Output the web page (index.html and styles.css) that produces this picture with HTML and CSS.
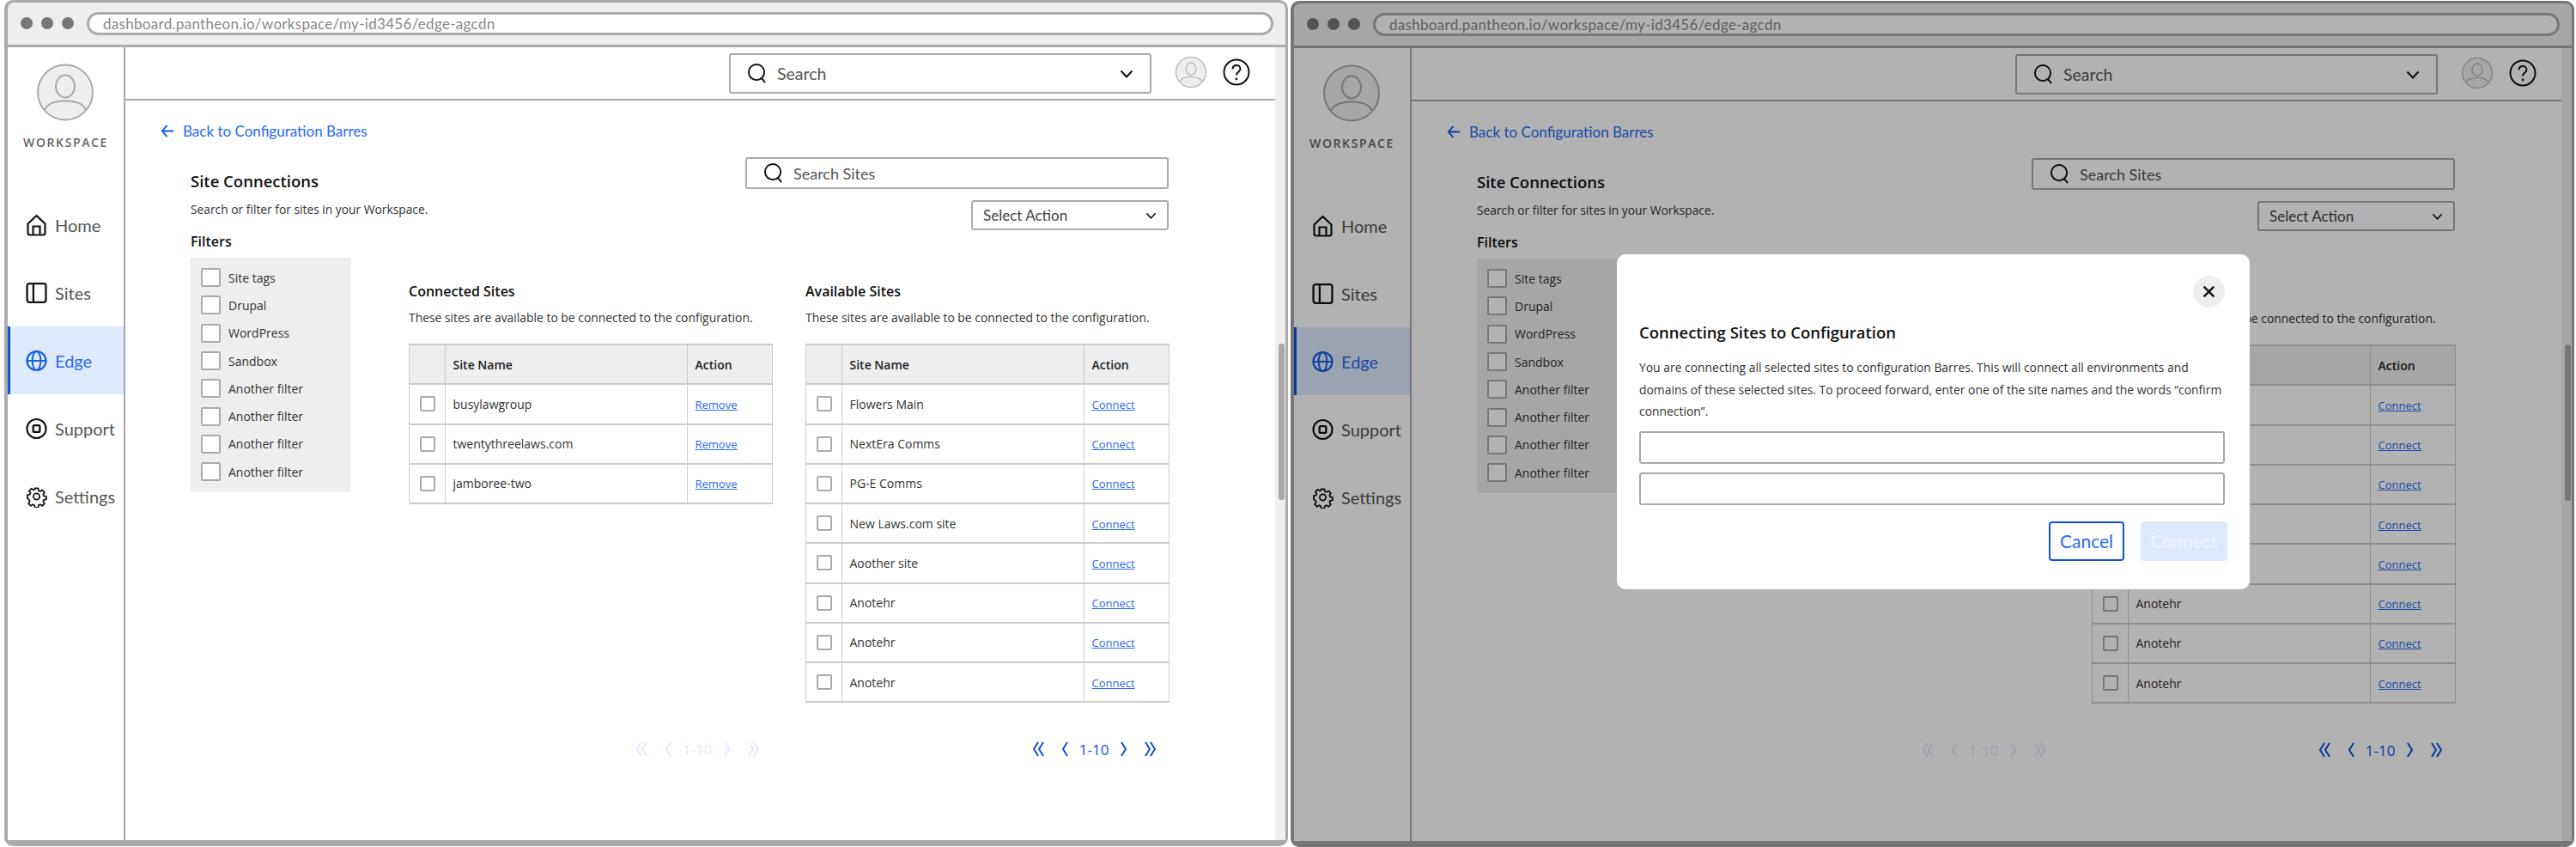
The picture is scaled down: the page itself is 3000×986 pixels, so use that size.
FILE: index.html
```html
<!DOCTYPE html>
<html lang="en">
<head>
    <meta charset="UTF-8">
    <title>Site Connections</title>
    <link rel="stylesheet" href="styles.css">
</head>
<body>
    <!-- shared icons -->
    <svg class="icon-defs" width="0" height="0">
        <symbol id="i-search" viewBox="0 0 24 24"><circle cx="11" cy="10.5" r="9.5" fill="none" stroke="currentColor" stroke-width="2"/><path d="M17 17.5l4.500 5.500" fill="none" stroke="currentColor" stroke-width="2"/></symbol>
        <symbol id="i-chevron" viewBox="0 0 16 10"><path d="M1.500 1.500L8 8.500l6.500-7" fill="none" stroke="currentColor" stroke-width="2"/></symbol>
        <symbol id="i-avatar" viewBox="0 0 66 66"><circle cx="33" cy="33" r="32" fill="#eee" stroke="#aaa" stroke-width="2"/><ellipse cx="33" cy="26" rx="11" ry="13" fill="#eee" stroke="#aaa" stroke-width="2"/><path d="M9 54c3-9 13-11 24-11s21 2 24 11" fill="#eee" stroke="#aaa" stroke-width="2"/></symbol>
        <symbol id="i-help" viewBox="0 0 32 32"><circle cx="16" cy="16" r="14.500" fill="none" stroke="currentColor" stroke-width="2"/><path d="M11.500 12.500c0-3 2-4.500 4.500-4.500s4.500 1.600 4.500 4.200c0 3.300-4.500 3.600-4.500 7.300" fill="none" stroke="currentColor" stroke-width="2"/><circle cx="16" cy="24" r="1.400" fill="currentColor"/></symbol>
        <symbol id="i-home" viewBox="0 0 24 26"><path d="M12 2L2 11.500V22a2.500 2.500 0 0 0 2.500 2.500h15A2.500 2.500 0 0 0 22 22V11.500z" fill="none" stroke="currentColor" stroke-width="2.200" stroke-linejoin="round"/><path d="M8 24.500V14.500h8v10" fill="none" stroke="currentColor" stroke-width="2.200"/></symbol>
        <symbol id="i-sites" viewBox="0 0 24 24"><rect x="1.500" y="1.500" width="21" height="21" rx="2.500" fill="none" stroke="currentColor" stroke-width="2.200"/><path d="M8.500 1.500v21" fill="none" stroke="currentColor" stroke-width="2.200"/></symbol>
        <symbol id="i-globe" viewBox="0 0 26 26"><circle cx="13" cy="13" r="11.500" fill="none" stroke="currentColor" stroke-width="2.200"/><ellipse cx="13" cy="13" rx="5" ry="11.500" fill="none" stroke="currentColor" stroke-width="2"/><path d="M1.500 13h23" fill="none" stroke="currentColor" stroke-width="2"/></symbol>
        <symbol id="i-support" viewBox="0 0 26 26"><circle cx="13" cy="13" r="11.500" fill="none" stroke="currentColor" stroke-width="2.200"/><rect x="9" y="9" width="8" height="8" rx="1.500" fill="none" stroke="currentColor" stroke-width="2.400"/></symbol>
        <symbol id="i-gear" viewBox="0 0 28 28"><path d="M11.600 2h4.800l.7 3.600 2.200.9 3-2 3.400 3.400-2 3 .9 2.200 3.600.7v4.400l-3.600.7-.9 2.200 2 3-3.400 3.400-3-2-2.200.9-.7 3.600h-4.800l-.7-3.600-2.200-.9-3 2-3.400-3.400 2-3-.9-2.200L.8 16.200v-4.400l3.600-.7.9-2.200-2-3 3.400-3.400 3 2 2.200-.9z" transform="translate(1.400 1.400) scale(.9)" fill="none" stroke="currentColor" stroke-width="2.200" stroke-linejoin="round"/><circle cx="14" cy="14" r="4" fill="none" stroke="currentColor" stroke-width="2"/></symbol>
        <symbol id="i-first" viewBox="0 0 14 18"><path d="M7 1L2 9l5 8M13 1L8 9l5 8" fill="none" stroke="currentColor" stroke-width="2"/></symbol>
        <symbol id="i-prev" viewBox="0 0 8 18"><path d="M7 1L2 9l5 8" fill="none" stroke="currentColor" stroke-width="2"/></symbol>
        <symbol id="i-next" viewBox="0 0 8 18"><path d="M1 1l5 8-5 8" fill="none" stroke="currentColor" stroke-width="2"/></symbol>
        <symbol id="i-last" viewBox="0 0 14 18"><path d="M1 1l5 8-5 8M7 1l5 8-5 8" fill="none" stroke="currentColor" stroke-width="2"/></symbol>
    </svg>

    <!-- left window -->
    <div class="browser">
        <div class="toolbar">
            <div class="dots"><span></span><span></span><span></span></div>
            <div class="url-bar">dashboard.pantheon.io/workspace/my-id3456/edge-agcdn</div>
        </div>
        <div class="window-body">
            <aside class="sidebar">
                <svg class="workspace-avatar"><use href="#i-avatar"/></svg>
                <div class="workspace-name">WORKSPACE</div>
                <nav class="nav">
                    <a class="nav-item"><svg class="nav-icon"><use href="#i-home"/></svg>Home</a>
                    <a class="nav-item"><svg class="nav-icon"><use href="#i-sites"/></svg>Sites</a>
                    <a class="nav-item active"><svg class="nav-icon"><use href="#i-globe"/></svg>Edge</a>
                    <a class="nav-item"><svg class="nav-icon"><use href="#i-support"/></svg>Support</a>
                    <a class="nav-item"><svg class="nav-icon"><use href="#i-gear"/></svg>Settings</a>
                </nav>
            </aside>
            <main class="main">
                <header class="topbar">
                    <div class="top-search">
                        <svg class="search-icon"><use href="#i-search"/></svg>
                        <span>Search</span>
                        <svg class="chevron"><use href="#i-chevron"/></svg>
                    </div>
                    <svg class="top-avatar"><use href="#i-avatar"/></svg>
                    <svg class="top-help"><use href="#i-help"/></svg>
                </header>
                <div class="page">
                    <a class="back-link"><svg class="back-arrow" viewBox="0 0 16 18"><path d="M8 2L2 9l6 7M2 9h14" fill="none" stroke="currentColor" stroke-width="2"/></svg>Back to Configuration Barres</a>
                    <div class="page-head">
                        <div>
                            <h1 class="page-title">Site Connections</h1>
                            <p class="page-desc">Search or filter for sites in your Workspace.</p>
                        </div>
                        <div class="page-actions">
                            <div class="site-search">
                                <svg class="search-icon"><use href="#i-search"/></svg>
                                <span>Search Sites</span>
                            </div>
                            <div class="action-select">
                                <span>Select Action</span>
                                <svg class="chevron small"><use href="#i-chevron"/></svg>
                            </div>
                        </div>
                    </div>
                    <div class="page-body">
                        <section class="filters">
                            <h2 class="filters-title">Filters</h2>
                            <ul class="filter-list">
                                <li><span class="check"></span>Site tags</li>
                                <li><span class="check"></span>Drupal</li>
                                <li><span class="check"></span>WordPress</li>
                                <li><span class="check"></span>Sandbox</li>
                                <li><span class="check"></span>Another filter</li>
                                <li><span class="check"></span>Another filter</li>
                                <li><span class="check"></span>Another filter</li>
                                <li><span class="check"></span>Another filter</li>
                            </ul>
                        </section>
                        <section class="site-col connected">
                            <h2 class="col-title">Connected Sites</h2>
                            <p class="col-desc">These sites are available to be connected to the configuration.</p>
                            <table class="site-table">
                                <thead><tr><th class="cell-check"></th><th class="cell-name">Site Name</th><th>Action</th></tr></thead>
                                <tbody>
                                    <tr><td><span class="row-check"></span></td><td>busylawgroup</td><td><a class="row-link">Remove</a></td></tr>
                                    <tr><td><span class="row-check"></span></td><td>twentythreelaws.com</td><td><a class="row-link">Remove</a></td></tr>
                                    <tr><td><span class="row-check"></span></td><td>jamboree-two</td><td><a class="row-link">Remove</a></td></tr>
                                </tbody>
                            </table>
                            <div class="pager disabled">
                                <svg class="pg-double"><use href="#i-first"/></svg><svg class="pg-single"><use href="#i-prev"/></svg><span>1-10</span><svg class="pg-single"><use href="#i-next"/></svg><svg class="pg-double"><use href="#i-last"/></svg>
                            </div>
                        </section>
                        <section class="site-col available">
                            <h2 class="col-title">Available Sites</h2>
                            <p class="col-desc">These sites are available to be connected to the configuration.</p>
                            <table class="site-table">
                                <thead><tr><th class="cell-check"></th><th class="cell-name">Site Name</th><th>Action</th></tr></thead>
                                <tbody>
                                    <tr><td><span class="row-check"></span></td><td>Flowers Main</td><td><a class="row-link">Connect</a></td></tr>
                                    <tr><td><span class="row-check"></span></td><td>NextEra Comms</td><td><a class="row-link">Connect</a></td></tr>
                                    <tr><td><span class="row-check"></span></td><td>PG-E Comms</td><td><a class="row-link">Connect</a></td></tr>
                                    <tr><td><span class="row-check"></span></td><td>New Laws.com site</td><td><a class="row-link">Connect</a></td></tr>
                                    <tr><td><span class="row-check"></span></td><td>Aoother site</td><td><a class="row-link">Connect</a></td></tr>
                                    <tr><td><span class="row-check"></span></td><td>Anotehr</td><td><a class="row-link">Connect</a></td></tr>
                                    <tr><td><span class="row-check"></span></td><td>Anotehr</td><td><a class="row-link">Connect</a></td></tr>
                                    <tr><td><span class="row-check"></span></td><td>Anotehr</td><td><a class="row-link">Connect</a></td></tr>
                                </tbody>
                            </table>
                            <div class="pager">
                                <svg class="pg-double"><use href="#i-first"/></svg><svg class="pg-single"><use href="#i-prev"/></svg><span>1-10</span><svg class="pg-single"><use href="#i-next"/></svg><svg class="pg-double"><use href="#i-last"/></svg>
                            </div>
                        </section>
                    </div>
                </div>
            </main>
            <div class="scrollbar"><div class="scroll-thumb"></div></div>
        </div>
    </div>

    <!-- right window, same page with the modal open -->
    <div class="browser with-modal">
        <div class="toolbar">
            <div class="dots"><span></span><span></span><span></span></div>
            <div class="url-bar">dashboard.pantheon.io/workspace/my-id3456/edge-agcdn</div>
        </div>
        <div class="window-body">
            <aside class="sidebar">
                <svg class="workspace-avatar"><use href="#i-avatar"/></svg>
                <div class="workspace-name">WORKSPACE</div>
                <nav class="nav">
                    <a class="nav-item"><svg class="nav-icon"><use href="#i-home"/></svg>Home</a>
                    <a class="nav-item"><svg class="nav-icon"><use href="#i-sites"/></svg>Sites</a>
                    <a class="nav-item active"><svg class="nav-icon"><use href="#i-globe"/></svg>Edge</a>
                    <a class="nav-item"><svg class="nav-icon"><use href="#i-support"/></svg>Support</a>
                    <a class="nav-item"><svg class="nav-icon"><use href="#i-gear"/></svg>Settings</a>
                </nav>
            </aside>
            <main class="main">
                <header class="topbar">
                    <div class="top-search">
                        <svg class="search-icon"><use href="#i-search"/></svg>
                        <span>Search</span>
                        <svg class="chevron"><use href="#i-chevron"/></svg>
                    </div>
                    <svg class="top-avatar"><use href="#i-avatar"/></svg>
                    <svg class="top-help"><use href="#i-help"/></svg>
                </header>
                <div class="page">
                    <a class="back-link"><svg class="back-arrow" viewBox="0 0 16 18"><path d="M8 2L2 9l6 7M2 9h14" fill="none" stroke="currentColor" stroke-width="2"/></svg>Back to Configuration Barres</a>
                    <div class="page-head">
                        <div>
                            <h1 class="page-title">Site Connections</h1>
                            <p class="page-desc">Search or filter for sites in your Workspace.</p>
                        </div>
                        <div class="page-actions">
                            <div class="site-search">
                                <svg class="search-icon"><use href="#i-search"/></svg>
                                <span>Search Sites</span>
                            </div>
                            <div class="action-select">
                                <span>Select Action</span>
                                <svg class="chevron small"><use href="#i-chevron"/></svg>
                            </div>
                        </div>
                    </div>
                    <div class="page-body">
                        <section class="filters">
                            <h2 class="filters-title">Filters</h2>
                            <ul class="filter-list">
                                <li><span class="check"></span>Site tags</li>
                                <li><span class="check"></span>Drupal</li>
                                <li><span class="check"></span>WordPress</li>
                                <li><span class="check"></span>Sandbox</li>
                                <li><span class="check"></span>Another filter</li>
                                <li><span class="check"></span>Another filter</li>
                                <li><span class="check"></span>Another filter</li>
                                <li><span class="check"></span>Another filter</li>
                            </ul>
                        </section>
                        <section class="site-col connected">
                            <h2 class="col-title">Connected Sites</h2>
                            <p class="col-desc">These sites are available to be connected to the configuration.</p>
                            <table class="site-table">
                                <thead><tr><th class="cell-check"></th><th class="cell-name">Site Name</th><th>Action</th></tr></thead>
                                <tbody>
                                    <tr><td><span class="row-check"></span></td><td>busylawgroup</td><td><a class="row-link">Remove</a></td></tr>
                                    <tr><td><span class="row-check"></span></td><td>twentythreelaws.com</td><td><a class="row-link">Remove</a></td></tr>
                                    <tr><td><span class="row-check"></span></td><td>jamboree-two</td><td><a class="row-link">Remove</a></td></tr>
                                </tbody>
                            </table>
                            <div class="pager disabled">
                                <svg class="pg-double"><use href="#i-first"/></svg><svg class="pg-single"><use href="#i-prev"/></svg><span>1-10</span><svg class="pg-single"><use href="#i-next"/></svg><svg class="pg-double"><use href="#i-last"/></svg>
                            </div>
                        </section>
                        <section class="site-col available">
                            <h2 class="col-title">Available Sites</h2>
                            <p class="col-desc">These sites are available to be connected to the configuration.</p>
                            <table class="site-table">
                                <thead><tr><th class="cell-check"></th><th class="cell-name">Site Name</th><th>Action</th></tr></thead>
                                <tbody>
                                    <tr><td><span class="row-check"></span></td><td>Flowers Main</td><td><a class="row-link">Connect</a></td></tr>
                                    <tr><td><span class="row-check"></span></td><td>NextEra Comms</td><td><a class="row-link">Connect</a></td></tr>
                                    <tr><td><span class="row-check"></span></td><td>PG-E Comms</td><td><a class="row-link">Connect</a></td></tr>
                                    <tr><td><span class="row-check"></span></td><td>New Laws.com site</td><td><a class="row-link">Connect</a></td></tr>
                                    <tr><td><span class="row-check"></span></td><td>Aoother site</td><td><a class="row-link">Connect</a></td></tr>
                                    <tr><td><span class="row-check"></span></td><td>Anotehr</td><td><a class="row-link">Connect</a></td></tr>
                                    <tr><td><span class="row-check"></span></td><td>Anotehr</td><td><a class="row-link">Connect</a></td></tr>
                                    <tr><td><span class="row-check"></span></td><td>Anotehr</td><td><a class="row-link">Connect</a></td></tr>
                                </tbody>
                            </table>
                            <div class="pager">
                                <svg class="pg-double"><use href="#i-first"/></svg><svg class="pg-single"><use href="#i-prev"/></svg><span>1-10</span><svg class="pg-single"><use href="#i-next"/></svg><svg class="pg-double"><use href="#i-last"/></svg>
                            </div>
                        </section>
                    </div>
                </div>
            </main>
            <div class="scrollbar"><div class="scroll-thumb"></div></div>
        </div>

        <div class="overlay"></div>
        <div class="modal">
            <div class="modal-top">
                <button class="modal-close"><svg viewBox="0 0 14 14" width="15" height="15"><path d="M1.500 1.500l11 11M12.500 1.500l-11 11" fill="none" stroke="currentColor" stroke-width="2.200"/></svg></button>
            </div>
            <h2 class="modal-title">Connecting Sites to Configuration</h2>
            <p class="modal-text">You are connecting all selected sites to configuration Barres. This will connect all environments and domains of these selected sites. To proceed forward, enter one of the site names and the words “confirm connection”.</p>
            <div class="modal-input"></div>
            <div class="modal-input"></div>
            <div class="modal-actions">
                <button class="btn btn-cancel">Cancel</button>
                <button class="btn btn-connect">Connect</button>
            </div>
        </div>
    </div>
</body>
</html>
```
FILE: styles.css
```css
* {
    margin: 0;
    padding: 0;
    box-sizing: border-box;
}

body {
    font-family: "Open Sans", sans-serif;
    background: #fff;
    color: #222;
    display: flex;
    gap: 3px;
    width: 3000px;
    height: 986px;
    padding-left: 5px;
    overflow: hidden;
}

.icon-defs {
    position: absolute;
}

/* browser frame */
.browser {
    position: relative;
    width: 1495px;
    height: 985px;
    flex: none;
    background: #aaa;
    padding: 3px 3px 7px 4px;
    border-radius: 10px;
    overflow: hidden;
    display: flex;
    flex-direction: column;
}

.with-modal {
    margin-top: 1px;
}

.toolbar {
    height: 52px;
    flex: none;
    background: #eee;
    border-bottom: 3px solid #aaa;
    border-radius: 7px 7px 0 0;
    display: flex;
    align-items: center;
    padding: 0 14px 1px 15px;
}

.dots {
    display: flex;
    gap: 10px;
    margin-right: 15px;
}

.dots span {
    width: 14px;
    height: 14px;
    border-radius: 50%;
    background: #777;
}

.url-bar {
    flex: 1;
    height: 27px;
    background: #fff;
    border: 3px solid #aaa;
    border-radius: 14px;
    font-family: "Lato", sans-serif;
    font-size: 17px;
    line-height: 21px;
    color: #888;
    padding-left: 16px;
    letter-spacing: 0.3px;
}

.window-body {
    flex: 1;
    display: flex;
    min-height: 0;
    background: #fff;
}

/* sidebar */
.sidebar {
    width: 137px;
    flex: none;
    border-right: 2px solid #aaa;
    display: flex;
    flex-direction: column;
    align-items: stretch;
}

.workspace-avatar {
    width: 66px;
    height: 67px;
    margin: 19px 0 0 34px;
}

.workspace-name {
    margin-top: 15px;
    text-align: center;
    font-size: 14px;
    font-weight: 600;
    letter-spacing: 1.6px;
    color: #666;
    height: 19px;
    line-height: 19px;
}

.nav {
    margin-top: 47px;
    display: flex;
    flex-direction: column;
}

.nav-item {
    height: 79px;
    display: flex;
    align-items: center;
    gap: 9px;
    padding-left: 21px;
    font-family: "Lato", sans-serif;
    font-size: 20px;
    color: #555;
}

.nav-item.active {
    background: #dfe9fc;
    border-left: 3px solid #0f4fe0;
    padding-left: 18px;
    color: #2a6af0;
}

.nav-icon {
    width: 25px;
    height: 26px;
    color: #111;
    flex: none;
}

.active .nav-icon {
    color: #0f5ee6;
}

/* main column */
.main {
    flex: 1;
    min-width: 0;
}

.topbar {
    height: 62px;
    border-bottom: 2px solid #aaa;
    display: flex;
    align-items: flex-start;
    justify-content: flex-end;
    padding: 7px 29px 0 0;
}

.top-search {
    width: 492px;
    height: 47px;
    border: 2px solid #aaa;
    border-radius: 3px;
    display: flex;
    align-items: center;
    padding: 0 19px;
    font-family: "Lato", sans-serif;
    font-size: 19.500px;
    color: #555;
}

.search-icon {
    width: 24px;
    height: 23px;
    color: #111;
    margin-right: 11px;
    flex: none;
}

.chevron {
    width: 16px;
    height: 10px;
    color: #111;
    margin-left: auto;
    flex: none;
}

.chevron.small {
    width: 13px;
    height: 8px;
}

.top-avatar {
    width: 36px;
    height: 36px;
    margin: 4px 0 0 28px;
    flex: none;
}

.top-help {
    width: 32px;
    height: 32px;
    margin: 6px 0 0 19px;
    color: #111;
    flex: none;
}

/* page */
.page {
    padding: 0 0 0 41px;
}

.back-link {
    display: flex;
    align-items: center;
    gap: 11px;
    height: 20px;
    margin-top: 25px;
    font-family: "Lato", sans-serif;
    font-size: 17px;
    color: #2a6af0;
}

.back-arrow {
    width: 15px;
    height: 17px;
    color: #0f5ee6;
    flex: none;
}

.page-head {
    display: flex;
    justify-content: space-between;
    align-items: flex-start;
    width: 1139px;
    margin: 21px 0 0 35px;
}

.page-title {
    font-size: 18.500px;
    font-weight: 600;
    line-height: 24px;
    color: #111;
    margin-top: 16px;
}

.page-desc {
    font-size: 13.800px;
    line-height: 18px;
    color: #333;
    margin-top: 12px;
}

.page-actions {
    display: flex;
    flex-direction: column;
    align-items: flex-end;
    gap: 13px;
}

.site-search {
    width: 493px;
    height: 37px;
    border: 2px solid #aaa;
    border-radius: 3px;
    display: flex;
    align-items: center;
    padding: 0 19px;
    font-family: "Lato", sans-serif;
    font-size: 18px;
    color: #555;
}

.action-select {
    width: 230px;
    height: 35px;
    border: 2px solid #aaa;
    border-radius: 3px;
    display: flex;
    align-items: center;
    padding: 0 12px;
    font-family: "Lato", sans-serif;
    font-size: 17px;
    color: #444;
}

.page-body {
    display: flex;
    margin: 2px 0 0 35px;
}

/* filters */
.filters {
    width: 187px;
    flex: none;
    margin-right: 67px;
}

.filters-title {
    font-size: 16px;
    font-weight: 600;
    line-height: 22px;
    color: #111;
}

.filter-list {
    list-style: none;
    margin-top: 8px;
    background: #eee;
    height: 273px;
    padding: 7px 12px;
}

.filter-list li {
    height: 32.300px;
    display: flex;
    align-items: center;
    gap: 9px;
    font-size: 14px;
    color: #333;
}

.check {
    width: 23px;
    height: 22px;
    background: #fff;
    border: 2px solid #aaa;
    border-radius: 2px;
    flex: none;
}

/* site tables */
.site-col {
    display: flex;
    flex-direction: column;
    width: 423.500px;
    flex: none;
    padding-top: 58px;
}

.connected {
    margin-right: 38.500px;
}

.col-title {
    font-size: 16px;
    font-weight: 600;
    line-height: 22px;
    color: #111;
}

.col-desc {
    font-size: 13.900px;
    line-height: 18px;
    color: #333;
    margin-top: 11px;
    white-space: nowrap;
}

.site-table {
    border-collapse: collapse;
    table-layout: fixed;
    width: 100%;
    margin-top: 21px;
    font-size: 14px;
    color: #333;
}

.site-table th,
.site-table td {
    border: 1px solid #ccc;
    border-top-width: 2px;
    border-bottom-width: 2px;
    height: 46.250px;
    padding: 0 9px;
    text-align: left;
}

.site-table th {
    background: #eee;
    font-weight: 600;
    color: #222;
}

.cell-check {
    width: 41.500px;
}

.cell-name {
    width: 282px;
}

.row-check {
    display: block;
    width: 18px;
    height: 18px;
    border: 2px solid #aaa;
    border-radius: 2px;
    margin-left: 3px;
}

.row-link {
    font-size: 13px;
    color: #2a6af0;
    text-decoration: underline;
}

/* pagination */
.pager {
    margin-top: auto;
    align-self: flex-end;
    margin-right: 15px;
    display: flex;
    align-items: center;
    height: 24px;
    color: #0f4fe0;
    font-size: 17px;
}

.available .pager {
    margin-top: 42px;
}

.pager.disabled {
    color: #dfe9fc;
}

.pg-double {
    width: 14px;
    height: 18px;
}

.pg-single {
    width: 8px;
    height: 18px;
    margin: 0 13px 0 20px;
}

.pg-single:nth-of-type(3) {
    margin: 0 20px 0 13px;
}

/* scrollbar strip */
.scrollbar {
    width: 12px;
    flex: none;
    background: #eee;
    padding-top: 345px;
}

.scroll-thumb {
    height: 182px;
    background: #aaa;
    border-radius: 3px;
    margin: 0 1px 0 4px;
}

/* modal */
.overlay {
    position: absolute;
    inset: 0;
    background: rgba(0, 0, 0, 0.3);
}

.modal {
    position: absolute;
    left: 380px;
    top: 295px;
    width: 737px;
    height: 390px;
    background: #fff;
    border-radius: 10px;
    padding: 25px 29px 0 26px;
    display: flex;
    flex-direction: column;
}

.modal-top {
    display: flex;
    justify-content: flex-end;
    height: 37px;
}

.modal-close {
    width: 37px;
    height: 37px;
    border: none;
    border-radius: 50%;
    background: #eee;
    color: #111;
    display: flex;
    align-items: center;
    justify-content: center;
}

.modal-title {
    font-size: 18.500px;
    font-weight: 600;
    line-height: 24px;
    margin-top: 17px;
    color: #111;
}

.modal-text {
    font-size: 13.900px;
    line-height: 25.500px;
    color: #333;
    margin: 16px -10px 0 0;
}

.modal-input {
    height: 38px;
    border: 2px solid #aaa;
    border-radius: 3px;
    margin-top: 10px;
}

.modal-text + .modal-input {
    margin-top: 10px;
}

.modal-actions {
    display: flex;
    justify-content: flex-end;
    gap: 19px;
    margin: 19px -3px 0 0;
}

.btn {
    height: 46px;
    border-radius: 4px;
    font-family: "Lato", sans-serif;
    font-size: 21px;
}

.btn-cancel {
    width: 88px;
    background: #fff;
    border: 2px solid #0f4fe0;
    color: #2a6af0;
}

.btn-connect {
    width: 101px;
    background: #dfe9fc;
    border: none;
    color: #f1f5fe;
}
```
